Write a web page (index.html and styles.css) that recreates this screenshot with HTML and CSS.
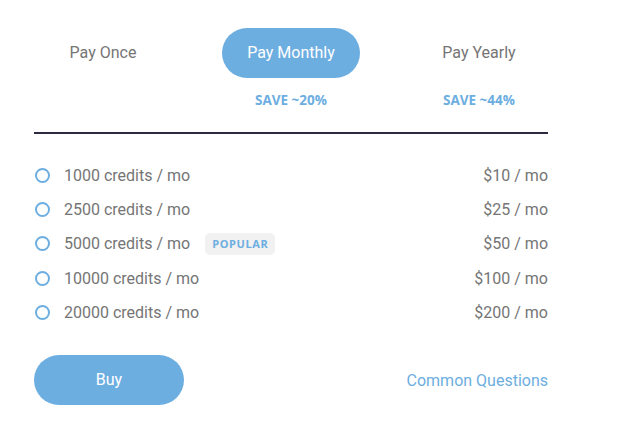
FILE: index.html
```html
<!DOCTYPE html>
<html lang="en">
<head>
    <meta charset="UTF-8">
    <title>Credits</title>
    <link rel="stylesheet" href="styles.css">
</head>
<body>
    <div class="pricing">
        <div class="tabs">
            <div class="tab">
                <span class="tab-btn">Pay Once</span>
            </div>
            <div class="tab">
                <span class="tab-btn active">Pay Monthly</span>
                <span class="save">SAVE ~20%</span>
            </div>
            <div class="tab">
                <span class="tab-btn">Pay Yearly</span>
                <span class="save">SAVE ~44%</span>
            </div>
        </div>

        <ul class="plans">
            <li class="plan"><span class="radio"></span><span class="credits">1000 credits / mo</span><span class="price">$10 / mo</span></li>
            <li class="plan"><span class="radio"></span><span class="credits">2500 credits / mo</span><span class="price">$25 / mo</span></li>
            <li class="plan"><span class="radio"></span><span class="credits">5000 credits / mo</span><span class="badge">POPULAR</span><span class="price">$50 / mo</span></li>
            <li class="plan"><span class="radio"></span><span class="credits">10000 credits / mo</span><span class="price">$100 / mo</span></li>
            <li class="plan"><span class="radio"></span><span class="credits">20000 credits / mo</span><span class="price">$200 / mo</span></li>
        </ul>

        <div class="footer">
            <a href="#" class="buy">Buy</a>
            <a href="#" class="faq">Common Questions</a>
        </div>
    </div>
</body>
</html>
```

FILE: styles.css
```css
body {
    margin: 0;
    padding: 0;
    background-color: #ffffff;
    font-family: Roboto, "Liberation Sans", sans-serif;
    color: #757575;
}

.pricing {
    width: 514px;
    margin-left: 34px;
    padding-top: 28px;
}

.tabs {
    display: flex;
    justify-content: space-between;
    height: 80px;
    padding-bottom: 24px;
    border-bottom: 2px solid #2b2a40;
}

.tab {
    width: 138px;
    display: flex;
    flex-direction: column;
    align-items: center;
}

.tab-btn {
    width: 100%;
    height: 50px;
    line-height: 50px;
    border-radius: 25px;
    text-align: center;
    font-size: 16px;
    color: #757575;
}

.tab-btn.active {
    background-color: #6daee1;
    color: #ffffff;
}

.save {
    margin-top: 14px;
    font-family: "Open Sans", sans-serif;
    font-weight: bold;
    font-size: 13.5px;
    line-height: 16px;
    color: #6daee1;
}

.plans {
    list-style: none;
    margin: 24px 0 0 0;
    padding: 0;
}

.plan {
    display: flex;
    align-items: center;
    height: 34.3px;
    font-size: 16px;
}

.radio {
    width: 11px;
    height: 11px;
    border: 2px solid #6daee1;
    border-radius: 50%;
    margin-left: 1px;
    margin-right: 14px;
}

.badge {
    margin-left: 15px;
    padding: 0 7px;
    height: 22px;
    line-height: 22px;
    border-radius: 5px;
    background-color: #f1f1f1;
    color: #6daee1;
    font-family: "Open Sans", sans-serif;
    font-weight: bold;
    font-size: 11px;
    letter-spacing: 0.6px;
}

.price {
    margin-left: auto;
}

.footer {
    display: flex;
    justify-content: space-between;
    align-items: center;
    margin-top: 26px;
}

.buy {
    width: 150px;
    height: 50px;
    line-height: 50px;
    border-radius: 25px;
    background-color: #6daee1;
    color: #ffffff;
    text-align: center;
    text-decoration: none;
    font-size: 16px;
}

.faq {
    color: #6daee1;
    text-decoration: none;
    font-size: 16px;
}
```
